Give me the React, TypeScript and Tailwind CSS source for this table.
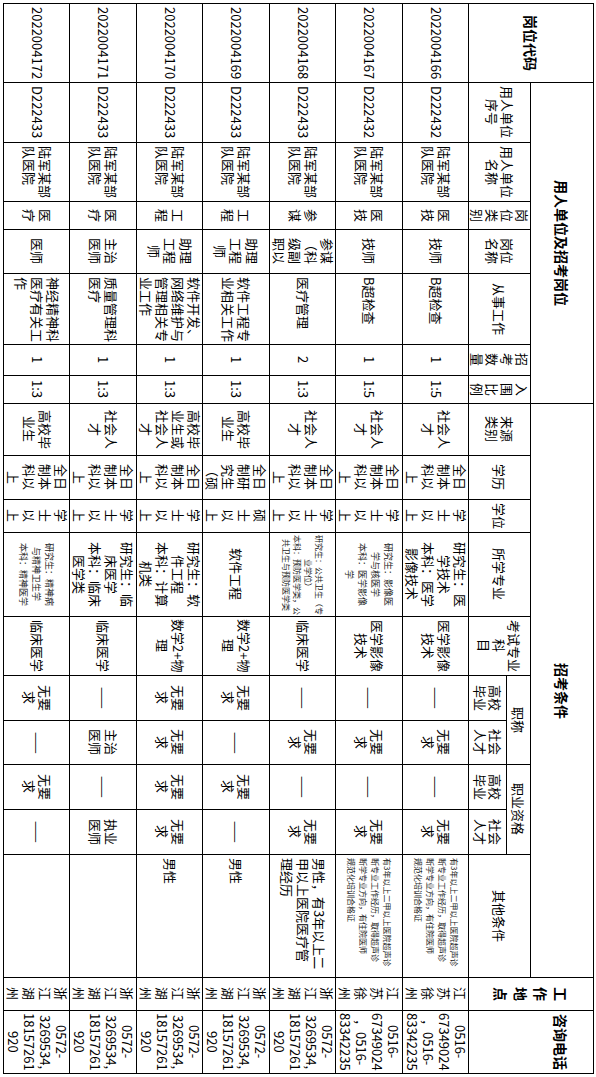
import React from "react"

type Tiny = { lines: string; cls: string }
type Val = string | Tiny

// 表格按原始方向书写，整体用竖排 + sideways 旋转成截图里的样子
const small = "text-[8px] leading-[11px] text-[#222]"
const mid = "text-[9px] leading-[13px] text-[#222]"

const tinyOther: Tiny = {
  lines: "有3年以上二甲以上医院超声诊|断专业工作经历，取得超声诊|断学专业方向，有住院医师|规范化培训合格证",
  cls: "text-[8px] leading-[12px] text-[#222]",
}

const phoneXz = "0516-|67349024|，0516-|83342235"
const phoneHz = "0572-|3269534,|18157261|920"

const rows: Val[][] = [
  ["2022004166", "D222432", "陆军某部|队医院", "医|技", "技师", "B超检查", "1", "1:5", "社会人|才", "全日|制本|科以|上", "学|士|以|上", "研究生：医|学技术|本科：医学|影像技术", "医学影像|技术", "——", "无要|求", "——", "无要|求", tinyOther, "江|苏|徐|州", phoneXz],
  ["2022004167", "D222432", "陆军某部|队医院", "医|技", "技师", "B超检查", "1", "1:5", "社会人|才", "全日|制本|科以|上", "学|士|以|上", { lines: "研究生：影像医|学与核医学|本科：医学影像|学", cls: mid }, "医学影像|技术", "——", "无要|求", "——", "无要|求", tinyOther, "江|苏|徐|州", phoneXz],
  ["2022004168", "D222433", "陆军某部|队医院", "参|谋", "参谋|（科|级副|职以", "医疗管理", "2", "1:3", "社会人|才", "全日|制本|科以|上", "学|士|以|上", { lines: "研究生：公共卫生（专|业学位）|本科：预防医学类，公|共卫生与预防医学类", cls: small }, "临床医学", "——", "无要|求", "——", "无要|求", "男性，有3年以上二|甲以上医院医疗管|理经历", "浙|江|湖|州", phoneHz],
  ["2022004169", "D222433", "陆军某部|队医院", "工|程", "助理|工程|师", "软件工程专|业相关工作", "1", "1:3", "高校毕|业生", "全日|制研|究生|（硕", "硕|士|以|上", "软件工程", "数学2+物|理", "无要|求", "——", "无要|求", "——", "男性", "浙|江|湖|州", phoneHz],
  ["2022004170", "D222433", "陆军某部|队医院", "工|程", "助理|工程|师", "软件开发、|网络维护与|管理相关专|业工作", "1", "1:3", "高校毕|业生或|社会人|才", "全日|制本|科以|上", "学|士|以|上", "研究生：软|件工程|本科：计算|机类", "数学2+物|理", "无要|求", "无要|求", "无要|求", "无要|求", "男性", "浙|江|湖|州", phoneHz],
  ["2022004171", "D222433", "陆军某部|队医院", "医|疗", "主治|医师", "质量管理科|医疗", "1", "1:3", "社会人|才", "全日|制本|科以|上", "学|士|以|上", "研究生：临|床医学|本科：临床|医学类", "临床医学", "——", "主治|医师", "——", "执业|医师", "", "浙|江|湖|州", phoneHz],
  ["2022004172", "D222433", "陆军某部|队医院", "医|疗", "医师", "神经精神科|医疗有关工|作", "1", "1:3", "高校毕|业生", "全日|制本|科以|上", "学|士|以|上", { lines: "研究生：精神病|与精神卫生学|本科：精神医学", cls: mid }, "临床医学", "无要|求", "——", "无要|求", "——", "", "浙|江|湖|州", phoneHz],
]

function Lines({ text }: { text: string }) {
  return (
    <div>
      {text.split("|").map((l, i) => (
        <span key={i} className="block whitespace-nowrap">
          {l}
        </span>
      ))}
    </div>
  )
}

function H({ c, t, bold }: { c: string; t: string; bold?: boolean }) {
  return (
    <div
      className={`bg-white flex items-center justify-center text-center overflow-hidden ${c} ${
        bold ? "font-bold text-[14px] leading-[20px]" : "text-[13px] leading-[15px]"
      }`}
    >
      <Lines text={t} />
    </div>
  )
}

function DataCell({ v, col }: { v: Val; col: number }) {
  // 用人单位名称、从事工作、其他条件 靠上（原表靠左）
  const top = col === 2 || col === 5 || col === 17
  const text = typeof v === "string" ? v : v.lines
  const size = typeof v === "string" ? "text-[13px] leading-[16px]" : v.cls
  return (
    <div
      className={`bg-white flex items-center overflow-hidden ${
        top ? "justify-start text-start pt-[3px]" : "justify-center text-center"
      } ${size}`}
    >
      <Lines text={text} />
    </div>
  )
}

export default function App() {
  return (
    <div className="min-h-screen bg-white p-[3px] text-black font-['Noto_Sans_CJK_SC',sans-serif]">
      <div className="[writing-mode:vertical-rl] [text-orientation:sideways] grid w-[591px] h-[1071px] border border-black bg-black gap-px grid-cols-[78px_59px_58px_27px_43px_70px_30px_27px_51px_43px_32px_83px_58px_44px_43px_44px_44px_122px_32px_62px] grid-rows-[62px_23px_37px_65px_66px_65px_66px_65px_66px_65px]">
        <H c="col-start-1 row-start-1 row-span-3" t="岗位代码" bold />
        <H c="col-start-2 col-span-7 row-start-1" t="用人单位及招考岗位" bold />
        <H c="col-start-9 col-span-10 row-start-1" t="招考条件" bold />
        <H c="col-start-19 row-start-1 row-span-3" t="工|作|地|点" bold />
        <div className="bg-white flex justify-center items-start pr-[22px] col-start-20 row-start-1 row-span-3 font-bold text-[14px] leading-[20px]">
          <Lines text="咨询电话" />
        </div>

        <H c="col-start-2 row-start-2 row-span-2" t="用人单位|序号" />
        <H c="col-start-3 row-start-2 row-span-2" t="用人单位|名称" />
        <H c="col-start-4 row-start-2 row-span-2" t="岗|位|类|别" />
        <H c="col-start-5 row-start-2 row-span-2" t="岗位|名称" />
        <H c="col-start-6 row-start-2 row-span-2" t="从事工作" />
        <H c="col-start-7 row-start-2 row-span-2" t="招|考|数|量" />
        <H c="col-start-8 row-start-2 row-span-2" t="入|围|比|例" />
        <H c="col-start-9 row-start-2 row-span-2" t="来源|类别" />
        <H c="col-start-10 row-start-2 row-span-2" t="学历" />
        <H c="col-start-11 row-start-2 row-span-2" t="学位" />
        <H c="col-start-12 row-start-2 row-span-2" t="所学专业" />
        <H c="col-start-13 row-start-2 row-span-2" t="考试专业|科|目" />
        <H c="col-start-14 col-span-2 row-start-2" t="职称" />
        <H c="col-start-16 col-span-2 row-start-2" t="职业资格" />
        <H c="col-start-18 row-start-2 row-span-2" t="其他条件" />
        <H c="col-start-14 row-start-3" t="高校|毕业" />
        <H c="col-start-15 row-start-3" t="社会|人才" />
        <H c="col-start-16 row-start-3" t="高校|毕业" />
        <H c="col-start-17 row-start-3" t="社会|人才" />

        {rows.map((r, ri) => r.map((v, ci) => <DataCell key={`${ri}-${ci}`} v={v} col={ci} />))}
      </div>
    </div>
  )
}
